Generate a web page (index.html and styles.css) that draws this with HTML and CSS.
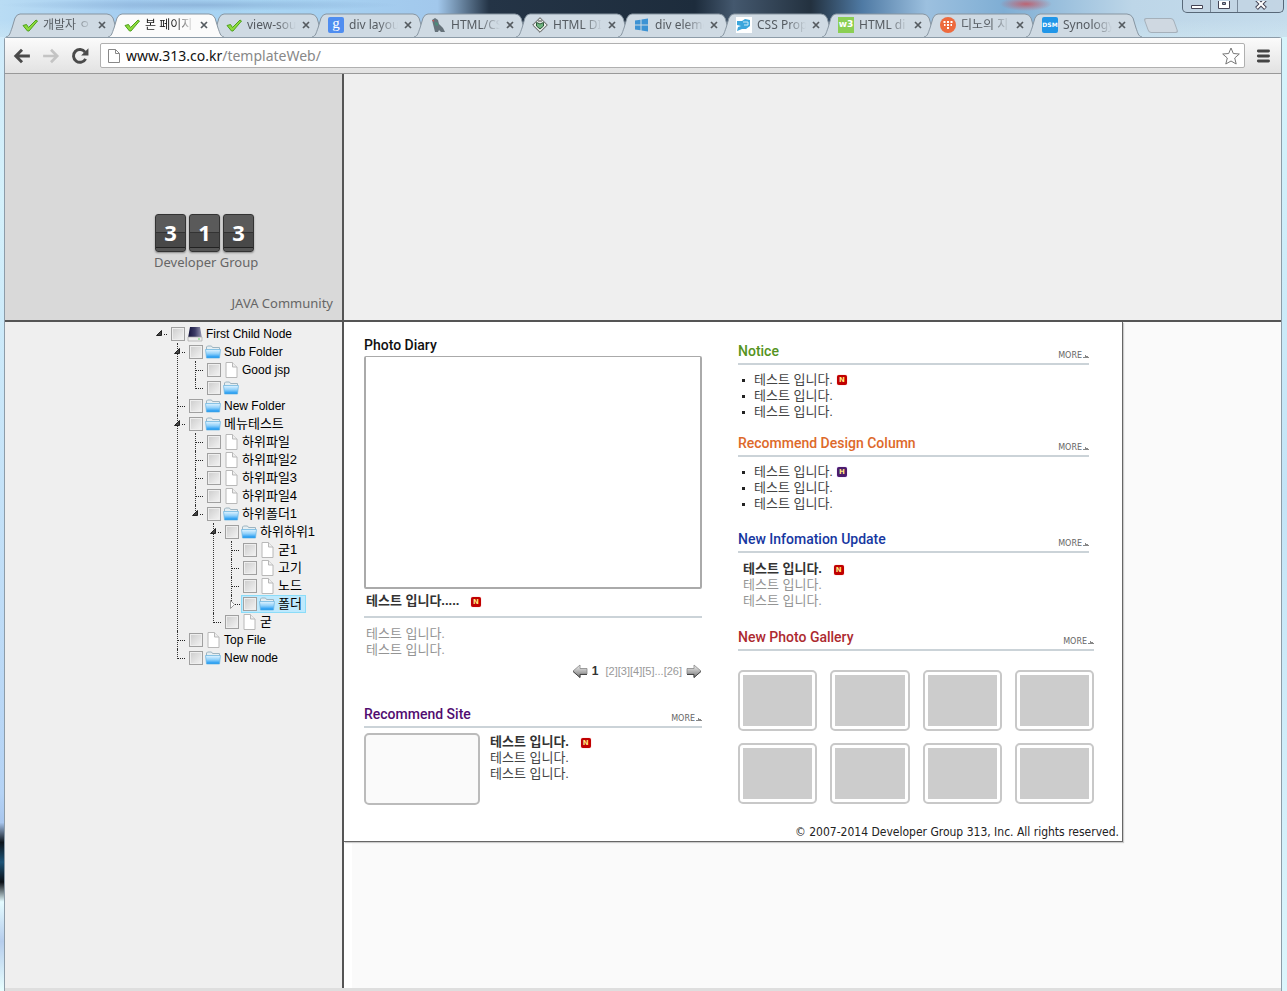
FILE: index.html
```html
<!DOCTYPE html>
<html lang="ko">
<head>
<meta charset="utf-8">
<title>본 페이지</title>
<link rel="stylesheet" href="styles.css">
</head>
<body>
<svg class="defs" aria-hidden="true">
  <defs>
    <linearGradient id="gf" x1="0" y1="0" x2="0" y2="1"><stop offset="0" stop-color="#e2f4ff"/><stop offset=".5" stop-color="#8fd0fa"/><stop offset="1" stop-color="#0a8ff0"/></linearGradient>
    <linearGradient id="gd" x1="0" y1="0" x2="1" y2="0"><stop offset="0" stop-color="#14143c"/><stop offset=".5" stop-color="#3c3c66"/><stop offset="1" stop-color="#9a9ab4"/></linearGradient>
    <linearGradient id="ga" x1="0" y1="0" x2="0" y2="1"><stop offset="0" stop-color="#f2f2f2"/><stop offset="1" stop-color="#777"/></linearGradient>
    <symbol id="shape" viewBox="0 0 116 24" preserveAspectRatio="none"><path d="M0 24 C4 23 4 20 6 15 L9 5 Q11 1 14 1 H101 Q105 1 107 5 L110 15 C112 20 112 23 116 24"/></symbol>
    <symbol id="check" viewBox="0 0 16 16"><path d="M1 8.500L4.500 7.500 6.500 10.500 14 3l1.500 1L7 14H5.500z" fill="#8ddb3c" stroke="#4da01c"/></symbol>
    <symbol id="close" viewBox="0 0 8 8"><path d="M1 1l6 6M7 1L1 7" stroke="#555b60" stroke-width="1.700"/></symbol>
    <symbol id="file" viewBox="0 0 16 16"><path d="M3 .5h6.500L14 5v10.500H3z" fill="#fff" stroke="#b8b8b8"/><path d="M9.500 .5v4.500H14" fill="#eee" stroke="#b8b8b8"/></symbol>
    <symbol id="folder" viewBox="0 0 16 16"><path d="M1.500 6V3L2.500 2h4l1 1.500h7V6z" fill="#e5eef2" stroke="#9eb4c0"/><path d="M.5 5.500h15L14.500 14h-13z" fill="url(#gf)" stroke="#69b5e2" stroke-width=".7"/></symbol>
    <symbol id="disk" viewBox="0 0 16 16"><path d="M3 1h10l2 11H1z" fill="url(#gd)"/><path d="M1 11h14v4H1z" fill="#ededed" stroke="#aaa" stroke-width=".7"/><path d="M11 13h2" stroke="#6d6"/></symbol>
    <symbol id="open" viewBox="0 0 18 18"><path d="M13 9.500h4" stroke="#222" stroke-dasharray="1 1"/><path d="M10.500 5.500v5h-5z" fill="#444" stroke="#222"/></symbol>
    <symbol id="shut" viewBox="0 0 18 18"><path d="M12 9.500h5" stroke="#222" stroke-dasharray="1 1"/><path d="M7.500 5.500v8l4-4z" fill="#fff" stroke="#999"/></symbol>
    <symbol id="leaf" viewBox="0 0 18 18"><path d="M9 9.500h8" stroke="#222" stroke-dasharray="1 1"/></symbol>
    <symbol id="arrow" viewBox="0 0 16 14"><path d="M1 4.500h7V1l7 6-7 6.500V10H1z" fill="url(#ga)" stroke="#888" stroke-width=".8"/><path d="M1 10.500h7v3l7-6" fill="none" stroke="#444"/></symbol>
    <symbol id="tri" viewBox="0 0 6 4"><path d="M0 3.500h6M2 2.500h3M2 1.500h1" stroke="#888"/></symbol>
  </defs>
</svg>

<header class="chrome">
  <nav class="tabs" aria-label="Tabs">
    <div class="tab"><svg class="shape"><use href="#shape"/></svg><svg class="fav"><use href="#check"/></svg><span class="name">개발자 ㅇ</span><button class="x" aria-label="Close tab"><svg><use href="#close"/></svg></button></div>
    <div class="tab active"><svg class="shape"><use href="#shape"/></svg><svg class="fav"><use href="#check"/></svg><span class="name">본 페이지</span><button class="x" aria-label="Close tab"><svg><use href="#close"/></svg></button></div>
    <div class="tab"><svg class="shape"><use href="#shape"/></svg><svg class="fav"><use href="#check"/></svg><span class="name">view-sou</span><button class="x" aria-label="Close tab"><svg><use href="#close"/></svg></button></div>
    <div class="tab"><svg class="shape"><use href="#shape"/></svg><span class="fav google">g</span><span class="name">div layou</span><button class="x" aria-label="Close tab"><svg><use href="#close"/></svg></button></div>
    <div class="tab"><svg class="shape"><use href="#shape"/></svg><svg class="fav" viewBox="0 0 16 16"><path d="M2 3l3-2 3 2 1 4 4 4 2 4h-4l-2-2-1 2H5l-1-4z" fill="#66727a"/><path d="M5 5l3 1v3l-3-1z" fill="#4d8a78"/><path d="M2 3h2v2z" fill="#c55"/></svg><span class="name">HTML/CS</span><button class="x" aria-label="Close tab"><svg><use href="#close"/></svg></button></div>
    <div class="tab"><svg class="shape"><use href="#shape"/></svg><svg class="fav" viewBox="0 0 16 16"><path d="M8 .7L15.300 8 8 15.300.7 8z" fill="#e7ece8" stroke="#555"/><path d="M8 12L4.500 9V5.500L8 7l3.500-1.500V9z" fill="#6fb57f" stroke="#2d5437"/><path d="M6 4h4" stroke="#444"/></svg><span class="name">HTML DI</span><button class="x" aria-label="Close tab"><svg><use href="#close"/></svg></button></div>
    <div class="tab"><svg class="shape"><use href="#shape"/></svg><svg class="fav" viewBox="0 0 16 16"><path d="M1 3.500L6.500 2.700V7.500H1zM7.500 2.500L14 1.500v6H7.500zM1 8.500h5.500v4.800L1 12.500zM7.500 8.500H14v6l-6.500-1z" fill="#3d93d4"/></svg><span class="name">div eleme</span><button class="x" aria-label="Close tab"><svg><use href="#close"/></svg></button></div>
    <div class="tab"><svg class="shape"><use href="#shape"/></svg><svg class="fav" viewBox="0 0 16 16"><path d="M0 0h16v16H0z" fill="#fff"/><path d="M1 4h5l3-2 5 1v6l-4 3H6l-5 2 1-4 3-1-4-1z" fill="#3ba6dc"/><path d="M7 5h5v3H8" fill="none" stroke="#c8eafa"/></svg><span class="name">CSS Prop</span><button class="x" aria-label="Close tab"><svg><use href="#close"/></svg></button></div>
    <div class="tab"><svg class="shape"><use href="#shape"/></svg><span class="fav w3">w3</span><span class="name">HTML di</span><button class="x" aria-label="Close tab"><svg><use href="#close"/></svg></button></div>
    <div class="tab"><svg class="shape"><use href="#shape"/></svg><svg class="fav" viewBox="0 0 16 16"><circle cx="8" cy="8" r="8" fill="#ed6a3e"/><path d="M3.500 5h2M7 5h2M10.500 5h2M7 8h2M7 11h2M4 8h1.500M10.500 8H12" stroke="#fff" stroke-width="2"/></svg><span class="name">디노의 지</span><button class="x" aria-label="Close tab"><svg><use href="#close"/></svg></button></div>
    <div class="tab"><svg class="shape"><use href="#shape"/></svg><span class="fav dsm">DSM</span><span class="name">Synology</span><button class="x" aria-label="Close tab"><svg><use href="#close"/></svg></button></div>
    <button class="newtab" aria-label="New tab"></button>
  </nav>
  <div class="wincontrols">
    <button aria-label="Minimize"><svg viewBox="0 0 14 10"><path d="M1.500 4.500h11v3h-11z" fill="#fff" stroke="#445"/></svg></button>
    <button aria-label="Maximize"><svg viewBox="0 0 14 10"><path d="M1.500 -2.500h11v10h-11z" fill="#fff" stroke="#445"/><path d="M5.500 1.500h3v2h-3z" fill="#9ab" stroke="#445"/></svg></button>
    <button class="wide" aria-label="Close"><svg viewBox="0 0 14 10"><path d="M2.500 -1.500L11.500 7.500M11.500 -1.500L2.500 7.500" stroke="#445" stroke-width="4"/><path d="M3 -1L11 7M11 -1L3 7" stroke="#fff" stroke-width="2"/></svg></button>
  </div>
</header>

<div class="window">
  <div class="toolbar">
    <button class="tool" aria-label="Back"><svg viewBox="0 0 16 16"><path d="M15 8H3M8 2.500L2.500 8 8 13.500" fill="none" stroke="#4a4a4a" stroke-width="2.600"/></svg></button>
    <button class="tool" aria-label="Forward"><svg viewBox="0 0 16 16"><path d="M1 8h12M8 2.500L13.500 8 8 13.500" fill="none" stroke="#c4c4c4" stroke-width="2.400"/></svg></button>
    <button class="tool" aria-label="Reload"><svg viewBox="0 0 16 16"><path d="M13 10.500A5.700 5.700 0 1 1 12.500 4.500" fill="none" stroke="#4a4a4a" stroke-width="2.600"/><path d="M15.500 1v6.500H9z" fill="#4a4a4a"/></svg></button>
    <div class="address">
      <svg class="doc" viewBox="0 0 12 16"><path d="M.5 1.500h7l4 4v9H.5zM7.500 1.500v4h4" fill="#fff" stroke="#888"/></svg>
      <div class="url" role="textbox" tabindex="0" aria-label="Address">www.313.co.kr<span>/templateWeb/</span></div>
      <button class="tool star" aria-label="Bookmark"><svg viewBox="0 0 18 18"><path d="M9 1l2.300 5.500 6 .5-4.600 4 1.500 6L9 14l-5.200 3 1.500-6L.7 7l6-.5z" fill="#fff" stroke="#777" stroke-linejoin="round"/></svg></button>
    </div>
    <button class="tool menu" aria-label="Menu"><svg viewBox="0 0 16 16"><path d="M3 3.500h9M3 8h9M3 12.500h9" stroke="#444" stroke-width="2.600" stroke-linecap="round"/></svg></button>
  </div>

  <div class="page">
    <div class="brand">
      <div class="logo">
        <div class="tiles"><span>3</span><span>1</span><span>3</span></div>
        <p>Developer Group</p>
      </div>
      <p class="community">JAVA Community</p>
    </div>
    <div class="banner"></div>
    <aside class="side">
      <ul class="tree">
        <li><div class="node"><svg class="tg"><use href="#open"/></svg><label><input type="checkbox"><svg><use href="#disk"/></svg>First Child Node</label></div>
          <ul>
            <li><div class="node"><svg class="tg"><use href="#open"/></svg><label><input type="checkbox"><svg><use href="#folder"/></svg>Sub Folder</label></div>
              <ul>
                <li><div class="node"><svg class="tg"><use href="#leaf"/></svg><label><input type="checkbox"><svg><use href="#file"/></svg>Good jsp</label></div></li>
                <li><div class="node"><svg class="tg"><use href="#leaf"/></svg><label><input type="checkbox" aria-label="Folder"><svg><use href="#folder"/></svg></label></div></li>
              </ul>
            </li>
            <li><div class="node"><svg class="tg"><use href="#leaf"/></svg><label><input type="checkbox"><svg><use href="#folder"/></svg>New Folder</label></div></li>
            <li><div class="node ko"><svg class="tg"><use href="#open"/></svg><label><input type="checkbox"><svg><use href="#folder"/></svg>메뉴테스트</label></div>
              <ul>
                <li><div class="node ko"><svg class="tg"><use href="#leaf"/></svg><label><input type="checkbox"><svg><use href="#file"/></svg>하위파일</label></div></li>
                <li><div class="node ko"><svg class="tg"><use href="#leaf"/></svg><label><input type="checkbox"><svg><use href="#file"/></svg>하위파일2</label></div></li>
                <li><div class="node ko"><svg class="tg"><use href="#leaf"/></svg><label><input type="checkbox"><svg><use href="#file"/></svg>하위파일3</label></div></li>
                <li><div class="node ko"><svg class="tg"><use href="#leaf"/></svg><label><input type="checkbox"><svg><use href="#file"/></svg>하위파일4</label></div></li>
                <li><div class="node ko"><svg class="tg"><use href="#open"/></svg><label><input type="checkbox"><svg><use href="#folder"/></svg>하위폴더1</label></div>
                  <ul>
                    <li><div class="node ko"><svg class="tg"><use href="#open"/></svg><label><input type="checkbox"><svg><use href="#folder"/></svg>하위하위1</label></div>
                      <ul>
                        <li><div class="node ko"><svg class="tg"><use href="#leaf"/></svg><label><input type="checkbox"><svg><use href="#file"/></svg>굳1</label></div></li>
                        <li><div class="node ko"><svg class="tg"><use href="#leaf"/></svg><label><input type="checkbox"><svg><use href="#file"/></svg>고기</label></div></li>
                        <li><div class="node ko"><svg class="tg"><use href="#leaf"/></svg><label><input type="checkbox"><svg><use href="#file"/></svg>노드</label></div></li>
                        <li><div class="node ko"><svg class="tg"><use href="#shut"/></svg><label class="selected"><input type="checkbox"><svg><use href="#folder"/></svg>폴더</label></div></li>
                      </ul>
                    </li>
                    <li><div class="node ko"><svg class="tg"><use href="#leaf"/></svg><label><input type="checkbox"><svg><use href="#file"/></svg>굳</label></div></li>
                  </ul>
                </li>
              </ul>
            </li>
            <li><div class="node"><svg class="tg"><use href="#leaf"/></svg><label><input type="checkbox"><svg><use href="#file"/></svg>Top File</label></div></li>
            <li><div class="node"><svg class="tg"><use href="#leaf"/></svg><label><input type="checkbox"><svg><use href="#folder"/></svg>New node</label></div></li>
          </ul>
        </li>
      </ul>
    </aside>
    <main class="main">
      <div class="panel">
        <div class="columns">
          <div class="left">
            <section class="diary">
              <h2>Photo Diary</h2>
              <div class="photo"></div>
              <p class="lead ruled">테스트 입니다..... <i class="badge">N</i></p>
              <div class="muted"><p>테스트 입니다.</p><p>테스트 입니다.</p></div>
              <nav class="pager" aria-label="Pages"><button aria-label="Previous"><svg class="flip"><use href="#arrow"/></svg></button><b>1</b><span><a href="#">[2]</a><a href="#">[3]</a><a href="#">[4]</a><a href="#">[5]</a>...<a href="#">[26]</a></span><button aria-label="Next"><svg><use href="#arrow"/></svg></button></nav>
            </section>
            <section class="block site">
              <div class="head"><h2>Recommend Site</h2><a class="more" href="#">MORE<svg><use href="#tri"/></svg></a></div>
              <div class="siterow">
                <div class="thumb"></div>
                <div class="sitetext"><p class="lead">테스트 입니다. <i class="badge">N</i></p><p>테스트 입니다.</p><p>테스트 입니다.</p></div>
              </div>
            </section>
          </div>
          <div class="right">
            <section class="block notice">
              <div class="head"><h2>Notice</h2><a class="more" href="#">MORE<svg><use href="#tri"/></svg></a></div>
              <ul class="items"><li>테스트 입니다. <i class="badge">N</i></li><li>테스트 입니다.</li><li>테스트 입니다.</li></ul>
            </section>
            <section class="block design">
              <div class="head"><h2>Recommend Design Column</h2><a class="more" href="#">MORE<svg><use href="#tri"/></svg></a></div>
              <ul class="items"><li>테스트 입니다. <i class="badge hot">H</i></li><li>테스트 입니다.</li><li>테스트 입니다.</li></ul>
            </section>
            <section class="block info">
              <div class="head"><h2>New Infomation Update</h2><a class="more" href="#">MORE<svg><use href="#tri"/></svg></a></div>
              <div class="news"><p class="lead">테스트 입니다. <i class="badge">N</i></p><div class="muted"><p>테스트 입니다.</p><p>테스트 입니다.</p></div></div>
            </section>
            <section class="block gallery">
              <div class="head"><h2>New Photo Gallery</h2><a class="more" href="#">MORE<svg><use href="#tri"/></svg></a></div>
              <div class="grid"><i></i><i></i><i></i><i></i><i></i><i></i><i></i><i></i></div>
            </section>
          </div>
        </div>
        <footer>© 2007-2014 Developer Group 313, Inc. All rights reserved.</footer>
      </div>
    </main>
  </div>
</div>
</body>
</html>
```
FILE: styles.css
```css
* { box-sizing: border-box; }
body, p, h2, ul { margin: 0; padding: 0; }
ul { list-style: none; }
button { border: 0; background: none; padding: 0; display: flex; align-items: center; justify-content: center; }
a { color: inherit; text-decoration: none; }
.defs { position: absolute; width: 0; height: 0; }

body {
  min-height: 100vh;
  display: flex;
  flex-direction: column;
  font: 13px/16px "Liberation Sans", "Noto Sans CJK KR", sans-serif;
  color: #444;
  background:
    linear-gradient(#cfeafa 0, #d4f1fb 20%, #b5d3f5 80%, #a8c6ee 83%, #0d151d 85%, #1d5478 87%, #0b1016 89%, #e4fbff 91%, #b6cdec 95%, #e8ffff 100%) left / 50% 100% no-repeat,
    linear-gradient(#d8f6fc, #c4e4f6 50%, #dcf6fc);
}

.chrome {
  height: 37px;
  display: flex;
  align-items: flex-end;
  justify-content: space-between;
  padding-left: 6px;
  background:
    radial-gradient(ellipse 26px 7px at 1026px 4px, #c8505acc, transparent),
    radial-gradient(ellipse 200px 6px at 200px 5px, #7fa3cc99, transparent),
    linear-gradient(transparent 55%, #d7eef566 100%),
    linear-gradient(90deg, #b9dcf4 0, #a4cdf0 10%, #a9d6f4 20%, #a2c8ec 34%, #243446 38%, #1d2c3c 54%, #44586e 57%, #23313f 63%, #4f7aa4 67%, #9cc0df 72%, #7faed4 78%, #bdd6e8 88%, #c5dcec 100%);
}
.tabs { display: flex; align-items: flex-end; height: 24px; }
.tab {
  position: relative;
  width: 116px;
  height: 24px;
  margin-right: -14px;
  padding: 0 16px;
  display: flex;
  align-items: center;
  font: 12px/20px "Noto Sans", "Noto Sans CJK KR", sans-serif;
  color: #555b61;
}
.tab.active { z-index: 1; color: #222; }
.shape { position: absolute; inset: 0; width: 100%; height: 100%; fill: #cfdae3; stroke: #8795a1; }
.active .shape { fill: #fbfbfb; }
.fav { position: relative; width: 16px; height: 16px; flex: none; margin-right: 5px; color: #fff; text-align: center; font-style: normal; }
.google { background: #4f8df0; border-radius: 2px; font: 15px/13px "Liberation Serif", serif; }
.w3 { background: #8bcf54; font: bold 9px/14px "DejaVu Sans", sans-serif; }
.dsm { background: #2196e8; border-radius: 2px; font: bold 6px/16px "DejaVu Sans", sans-serif; }
.name { position: relative; flex: 1; overflow: hidden; white-space: nowrap; mask-image: linear-gradient(90deg, #000 60%, transparent); }
.x { position: relative; margin-left: 6px; }
.x svg { width: 8px; height: 8px; }
.newtab { width: 30px; height: 15px; margin: 0 0 4px 18px; background: #cfd8e1; border: 1px solid #a5b0ba; border-radius: 3px; transform: skewX(20deg); }
.wincontrols { align-self: flex-start; display: flex; height: 13px; margin-right: 3px; border: 1px solid #586878; border-top: 0; border-radius: 0 0 5px 5px; background: #c2d3e2cc; }
.wincontrols button { width: 27px; overflow: hidden; }
.wincontrols button + button { border-left: 1px solid #788898; }
.wincontrols .wide { width: 46px; }
.wincontrols svg { width: 14px; height: 10px; }

.window { flex: 1; display: flex; flex-direction: column; margin: 0 5px 0 4px; border: 1px solid #8d9ca8; border-width: 1px 1px 0; border-radius: 3px 3px 0 0; padding-bottom: 3px; background: #dedede; }
.toolbar { height: 36px; display: flex; align-items: center; padding: 0 8px; background: linear-gradient(#fbfbfb, #e2e2e2); border-bottom: 1px solid #999; }
.tool svg { width: 18px; height: 18px; display: block; }
.toolbar > .tool { margin-right: 11px; }
.toolbar > .menu { margin: 0 0 0 10px; }
.address { flex: 1; height: 25px; display: flex; align-items: center; padding: 0 4px 0 7px; background: #fff; border: 1px solid #b0b0b0; border-radius: 2px; }
.doc { width: 12px; height: 16px; margin-right: 6px; }
.url { flex: 1; font: 14px/20px "Noto Sans", sans-serif; color: #111; }
.url span { color: #888; }

.page { flex: 1; display: grid; grid-template-columns: 339px 1fr; grid-template-rows: 248px 1fr; background: #efefef; }
.brand, .side { border-right: 2px solid #555; }
.brand, .banner { border-bottom: 2px solid #555; }
.brand { display: flex; flex-direction: column; justify-content: flex-end; padding: 0 9px 8px 149px; background: #d9d9d9; font: 13px/18px "Noto Sans", sans-serif; color: #666; }
.logo { align-self: flex-start; }
.tiles { display: flex; gap: 3px; padding-left: 1px; margin-bottom: 1px; }
.tiles span { width: 31px; height: 38px; border: 1px solid #333; border-radius: 3px; background: linear-gradient(#5a5a5a 0 47%, #333 47% 50%, #484848 50% 89%, #222 89% 92%, #555 92%); color: #fff; text-align: center; font: bold 22px/34px "Noto Sans", sans-serif; box-shadow: 0 1px 2px #888; }
.community { align-self: flex-end; margin-top: 23px; }

.side { padding: 3px 0 0 146px; overflow: hidden; }
.tree { font-size: 12px; color: #000; }
.tree ul { padding-left: 18px; }
.tree li { position: relative; }
.tree ul > li::before { content: ""; position: absolute; left: 8px; top: 0; height: 100%; border-left: 1px dotted #333; }
.tree ul > li:last-child::before { height: 10px; }
.node { position: relative; display: flex; align-items: center; height: 18px; white-space: nowrap; }
.node.ko { font-size: 13px; }
.node svg { width: 16px; height: 16px; margin: 0 3px 0 2px; flex: none; }
.node .tg { width: 18px; height: 18px; margin: 0; }
.node label { display: flex; align-items: center; height: 18px; padding: 0 3px 0 1px; border: 1px solid transparent; }
.node label.selected { background: #bee9fd; border-color: #8bdcf8; }
.node input { appearance: none; width: 14px; height: 14px; margin: 0; border: 1px solid #a0a0a0; background: linear-gradient(135deg, #ccc, #f4f4f4); box-shadow: inset 0 0 0 1px #eee; }

.main { background: linear-gradient(90deg, #fff 8px, #fafafa 8px); }
.panel { max-width: 779px; background: #fff; border: 1px solid #666; border-width: 0 1px 1px 0; box-shadow: 1px 1px 1px #ccc; }
.columns { display: flex; justify-content: space-between; padding: 13px 28px 0 20px; }
.left { flex: 0 1 338px; }
.right { flex: 0 1 356px; padding-top: 6px; }
h2 { font: 500 14px/20px Roboto, sans-serif; }
.diary h2 { color: #111; }
.site h2 { color: #510c70; }
.notice h2 { color: #559321; }
.design h2 { color: #dd692a; }
.info h2 { color: #1637a1; }
.gallery h2 { color: #ad2a30; }
.photo { height: 233px; margin-top: 1px; border: 2px solid #aaa; border-width: 1px 2px 2px; border-radius: 2px; }
.lead { font-weight: bold; color: #333; }
.muted { color: #949494; }
.ruled { padding: 4px 2px 7px; border-bottom: 2px solid #cbd3d8; }
.diary .muted { padding: 8px 2px 5px; }
.badge { display: inline-block; width: 10px; height: 10px; margin-left: 2px; border-radius: 2px; background: #c00000; color: #ffe780; font: bold 7px/10px "DejaVu Sans", sans-serif; text-align: center; vertical-align: 1px; box-shadow: 0 0 1px #e66; }
.lead .badge { margin-left: 8px; }
.items .badge { margin-left: 0; }
.badge.hot { background: #4b1c6c; box-shadow: 0 0 1px #a6e; }
.pager { display: flex; justify-content: flex-end; align-items: center; gap: 4px; height: 16px; font-size: 12px; color: #999; }
.pager b { color: #333; }
.pager span { margin-left: 3px; font-size: 11px; }
.pager svg { width: 16px; height: 14px; }
.pager .flip { transform: scaleX(-1); }

.head { display: flex; justify-content: space-between; align-items: center; padding-bottom: 2px; border-bottom: 2px solid #cbd3d8; }
.more { display: flex; align-items: center; gap: 1px; margin-top: 10px; font: 8px/8px "DejaVu Sans", sans-serif; color: #666; }
.more svg { width: 6px; height: 4px; }
.site { margin-top: 25px; }
.siterow { display: flex; gap: 10px; padding-top: 5px; }
.sitetext { padding-top: 1px; }
.thumb { width: 116px; height: 72px; border: 2px solid #bbb; border-radius: 5px; background: #fafafa; }
.items { padding: 7px 0 13px 4px; }
.items li { display: flex; align-items: center; gap: 4px; }
.items li::before { content: ""; width: 3px; height: 3px; margin-right: 5px; background: #222; }
.notice .head, .design .head, .info .head { margin-right: 5px; }
.design .items { padding-bottom: 17px; }
.news { padding: 8px 5px 18px; }
.grid { display: grid; grid-template-columns: repeat(4, 1fr); gap: 12px 13px; padding-top: 19px; }
.grid i { height: 61px; padding: 3px; border: 2px solid #c8c8c8; border-radius: 5px; background: #ccc content-box; }
footer { padding: 19px 3px 1px; text-align: right; font: 12px/16px "DejaVu Sans Condensed", "DejaVu Sans", sans-serif; color: #222; }
```
